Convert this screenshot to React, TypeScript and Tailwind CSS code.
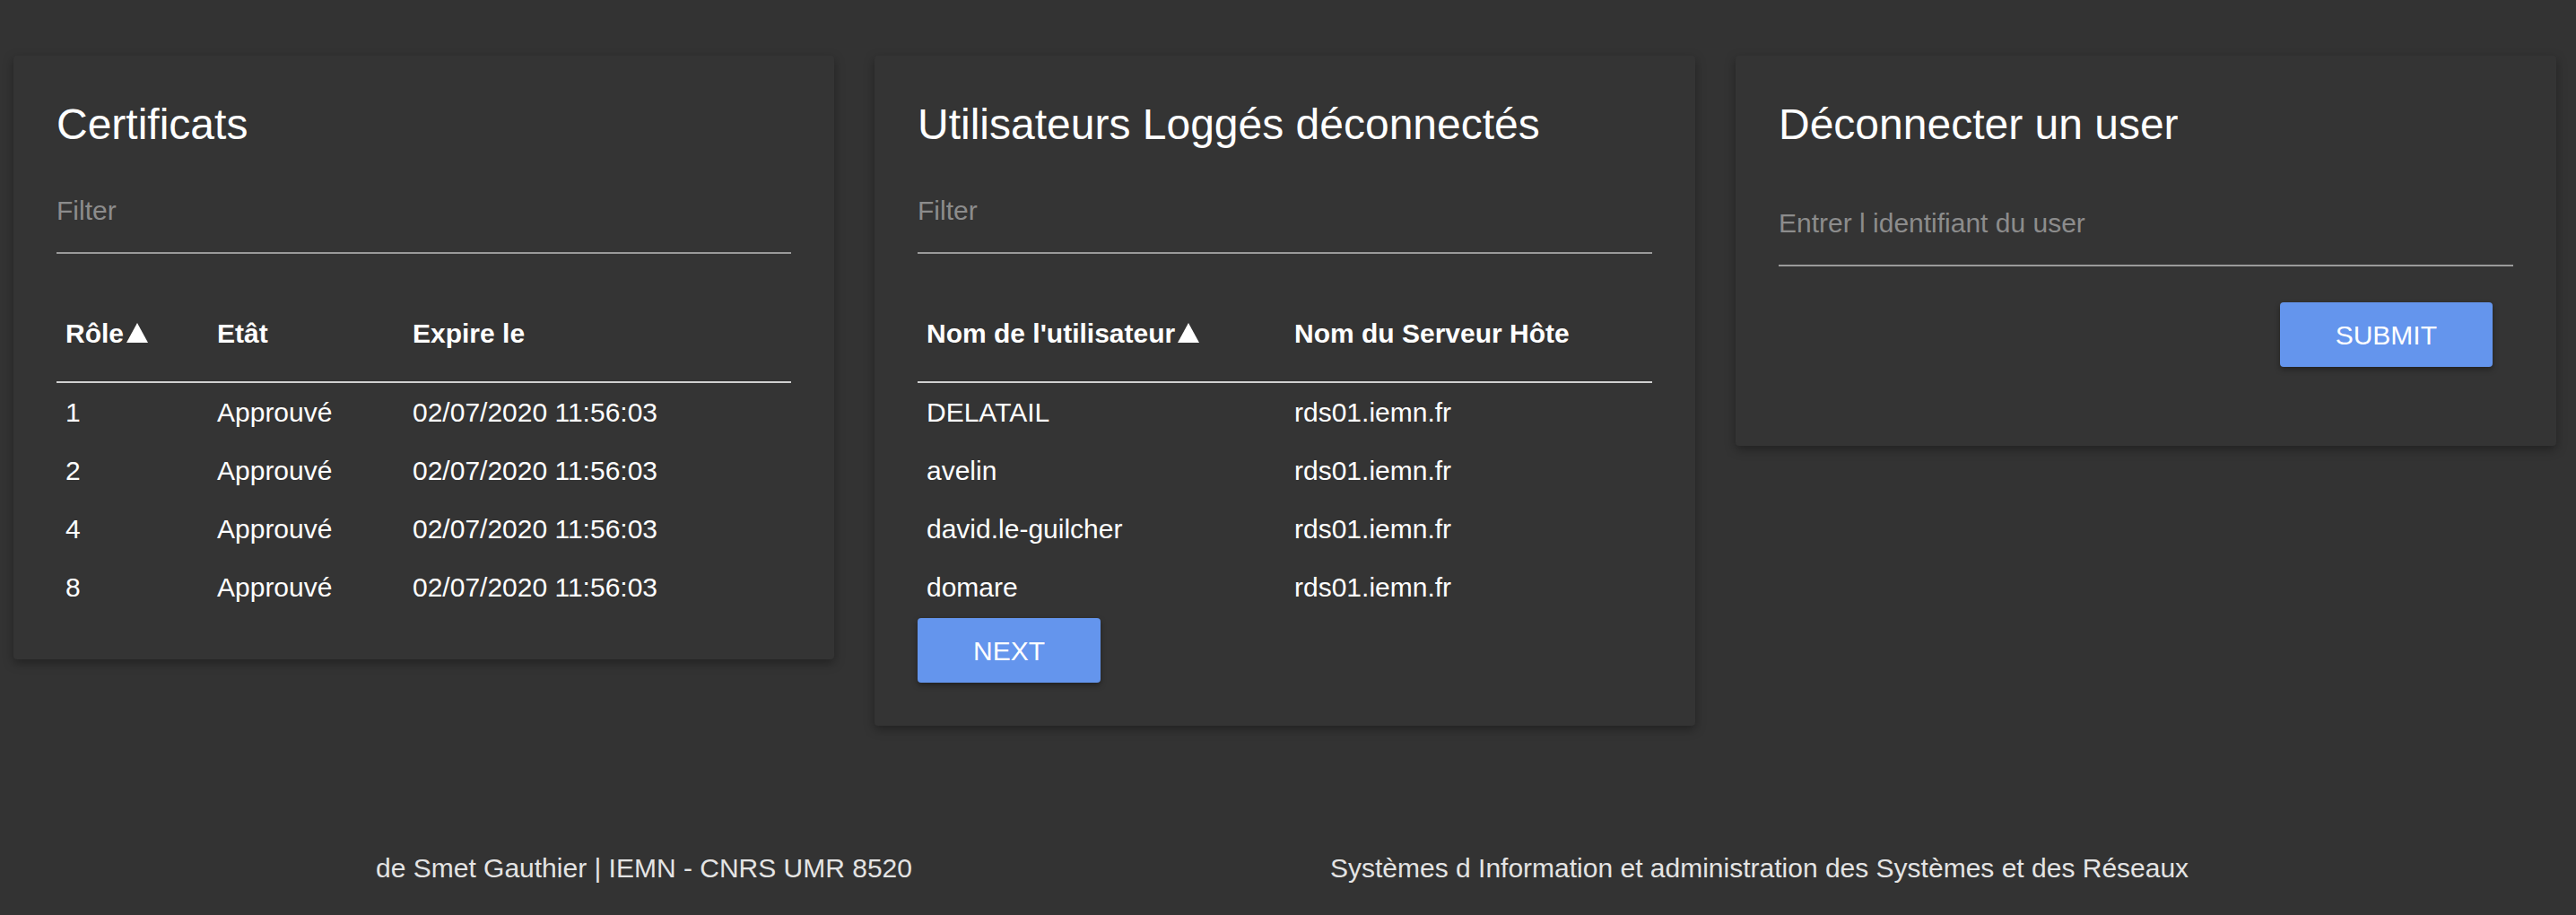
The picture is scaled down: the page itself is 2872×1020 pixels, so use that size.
import React from "react";

const certificats = [
    {role: "1", etat: "Approuvé", expire: "02/07/2020 11:56:03"},
    {role: "2", etat: "Approuvé", expire: "02/07/2020 11:56:03"},
    {role: "4", etat: "Approuvé", expire: "02/07/2020 11:56:03"},
    {role: "8", etat: "Approuvé", expire: "02/07/2020 11:56:03"},
];

const users = [
    {name: "DELATAIL", host: "rds01.iemn.fr"},
    {name: "avelin", host: "rds01.iemn.fr"},
    {name: "david.le-guilcher", host: "rds01.iemn.fr"},
    {name: "domare", host: "rds01.iemn.fr"},
];

// sort arrow next to the sorted column
function SortUp() {
    return (
        <svg viewBox="0 0 24 22" className="inline-block w-[24px] h-[22px] ml-[3px] align-baseline fill-white">
            <path d="M12 0 L24 22 L0 22 Z"/>
        </svg>
    )
}

function Card({title, children}: {title: string, children: React.ReactNode}) {
    return (
        <div className="w-[915px] shrink-0 rounded bg-[#343434] p-[48px] shadow-[0_4px_12px_rgba(0,0,0,0.35)]">
            <h2 className="text-[48px] leading-[58px] font-light text-white">{title}</h2>
            {children}
        </div>
    )
}

function Field({placeholder, className}: {placeholder: string, className: string}) {
    return (
        <div className={`border-b-2 border-[#9a9a9a] pb-[28px] ${className}`}>
            <input
                placeholder={placeholder}
                className="block w-full h-[36px] bg-transparent text-[30px] leading-[36px] text-white outline-none placeholder:text-[#8c8c8c]"
            />
        </div>
    )
}

function Button({label, className}: {label: string, className?: string}) {
    return (
        <button className={`h-[72px] px-[62px] rounded bg-[#6495ed] text-[30px] text-white shadow-[0_3px_6px_rgba(0,0,0,0.35)] ${className ?? ""}`}>
            {label}
        </button>
    )
}

export default function App() {
    return (
        <div className="flex flex-col h-[1020px] bg-[#333333] font-['Liberation_Sans',Arial,sans-serif]">
            <div className="flex items-start gap-[45px] px-[15px] pt-[62px]">
                <Card title="Certificats">
                    <Field placeholder="Filter" className="mt-[49px]"/>
                    <div className="mt-[34px]">
                        <div className="grid grid-cols-[169px_218px_1fr] h-[110px] items-center border-b-2 border-[#d0d0d0] text-[30px] font-bold text-white">
                            <div className="pl-[10px]">Rôle<SortUp/></div>
                            <div className="pl-[10px]">Etât</div>
                            <div className="pl-[10px]">Expire le</div>
                        </div>
                        {certificats.map((item, key) => (
                            <div key={key} className="grid grid-cols-[169px_218px_1fr] h-[65px] items-center text-[30px] text-white">
                                <div className="pl-[10px]">{item.role}</div>
                                <div className="pl-[10px]">{item.etat}</div>
                                <div className="pl-[10px]">{item.expire}</div>
                            </div>
                        ))}
                    </div>
                </Card>

                <Card title="Utilisateurs Loggés déconnectés">
                    <Field placeholder="Filter" className="mt-[49px]"/>
                    <div className="mt-[34px]">
                        <div className="grid grid-cols-[410px_1fr] h-[110px] items-center border-b-2 border-[#d0d0d0] text-[30px] font-bold text-white">
                            <div className="pl-[10px]">Nom de l'utilisateur<SortUp/></div>
                            <div className="pl-[10px]">Nom du Serveur Hôte</div>
                        </div>
                        {users.map((item, key) => (
                            <div key={key} className="grid grid-cols-[410px_1fr] h-[65px] items-center text-[30px] text-white">
                                <div className="pl-[10px]">{item.name}</div>
                                <div className="pl-[10px]">{item.host}</div>
                            </div>
                        ))}
                    </div>
                    <Button label="NEXT" className="mt-[2px]"/>
                </Card>

                <Card title="Déconnecter un user">
                    <Field placeholder="Entrer l identifiant du user" className="mt-[63px]"/>
                    <div className="flex justify-end mt-[40px] mb-[40px] pr-[23px]">
                        <Button label="SUBMIT"/>
                    </div>
                </Card>
            </div>

            <div className="grid grid-cols-2 mt-auto pb-[34px] text-[30px] leading-[36px] font-light text-[#e4e4e4]">
                <div className="text-center">de Smet Gauthier | IEMN - CNRS UMR 8520</div>
                <div className="pl-[47px]">Systèmes d Information et administration des Systèmes et des Réseaux</div>
            </div>
        </div>
    )
}
